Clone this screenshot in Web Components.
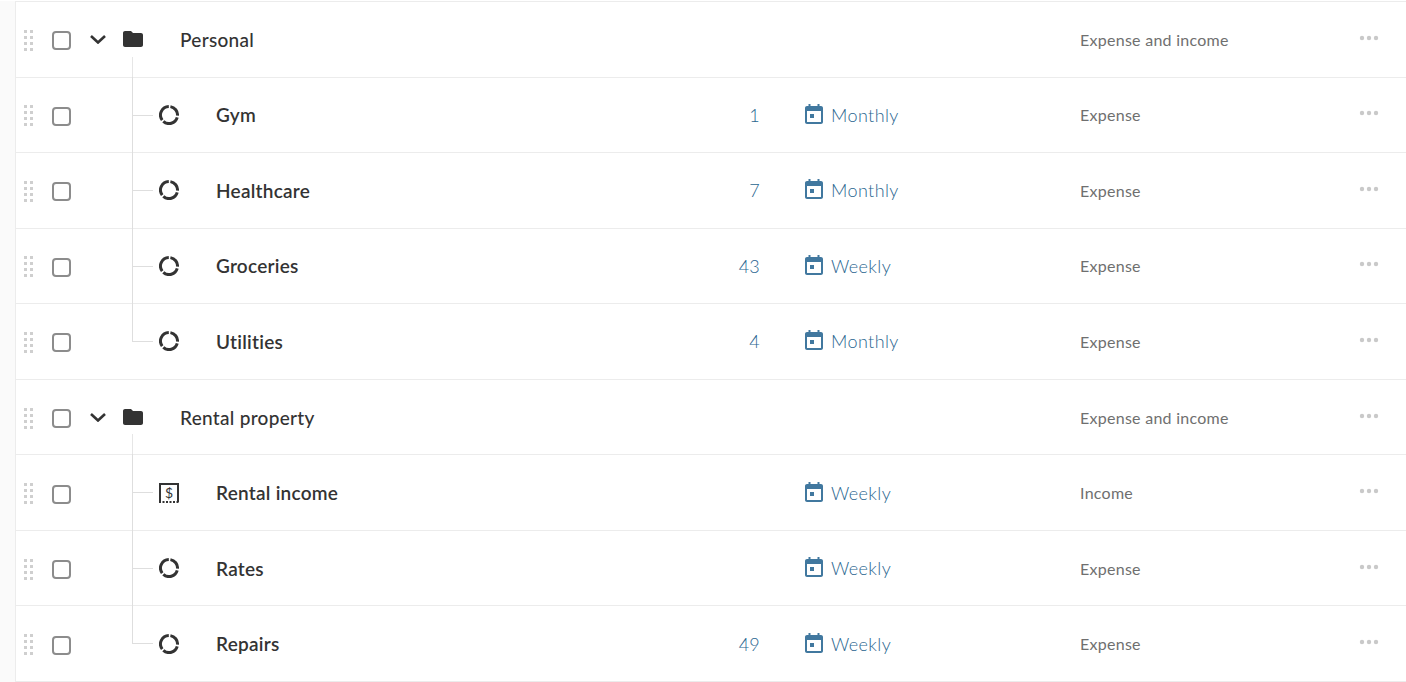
<!DOCTYPE html>
<html lang="en"><head><meta charset="utf-8"><title>Categories</title>
<style>
html,body{margin:0;padding:0;background:#fff}
body{font-family:Lato,"Open Sans",sans-serif;overflow:hidden;height:682px}
</style></head><body>
<template id="cat-list-t"><style>
:host{display:block;margin-left:15px;margin-top:1px;border-left:1px solid #ececec;box-shadow:-15px 0 0 #fafafa;border-top:1px solid #ececec;height:680px}
.g{display:grid;grid-auto-rows:75.556px}
</style><div class="g"><slot></slot></div></template>

<template id="cat-row-t"><style>
:host{display:flex;align-items:center;position:relative;border-bottom:1px solid #ececec;box-sizing:border-box;min-height:0;color:#333}
.handle{display:flex;margin-left:8px;width:10px;margin-top:2px;flex:none}
.check{flex:none;box-sizing:border-box;width:19px;height:19px;border:2px solid #8c8c8c;border-radius:4px;margin-left:18px;margin-top:3px;background:#fff}
.lead{flex:none;display:flex;align-items:center;height:100%}
.chev{margin-left:19px;width:16px;height:9px;display:block}
.folder{margin-left:17px;width:20px;height:16px;display:block}
.icon{margin-left:88px;width:20px;height:20px;display:block}
.name{flex:none;font-size:19px;letter-spacing:.25px;font-weight:600;white-space:nowrap}
:host([kind=group]) .name{margin-left:37px;width:900px;font-weight:500;letter-spacing:.3px}
:host([kind=child]) .name{margin-left:37px;width:508px}
.count{flex:none;width:36px;margin-right:45px;text-align:right;font-size:18px;color:#2a6690;font-weight:300;letter-spacing:.2px}
.freq{flex:none;width:275px;display:flex;align-items:center;gap:8px;font-size:18px;color:#2a6690;font-weight:300;letter-spacing:.4px}
.freq svg{width:18px;height:20px;display:block;margin-top:-2px}
.type{flex:none;width:279px;font-size:16px;color:#6f6f6f;letter-spacing:.27px;font-weight:400}
.dots{flex:none;margin-top:-3px;display:block;width:20px;height:6px}
.v{position:absolute;left:116px;top:-1px;bottom:-1px;width:1px;background:#dedede}
:host([kind=group]) .v{left:116px;top:auto;bottom:-1px;height:21px;background:#e6e6e6}
:host([last]) .v{bottom:auto;height:39px}
.h{position:absolute;left:116px;top:37px;width:21px;height:1px;background:#dedede}
</style>
<span class="v"></span><span class="h"></span>
<svg class="handle" viewBox="0 0 10 21" height="21" fill="#cfcfcf"><rect x="0" y="0" width="3" height="3"/><rect x="6" y="0" width="3" height="3"/><rect x="0" y="6" width="3" height="3"/><rect x="6" y="6" width="3" height="3"/><rect x="0" y="12" width="3" height="3"/><rect x="6" y="12" width="3" height="3"/><rect x="0" y="18" width="3" height="3"/><rect x="6" y="18" width="3" height="3"/></svg>
<span class="check"></span>
<span class="lead"></span>
<span class="name"><slot></slot></span>
<span class="count"></span>
<span class="freq"></span>
<span class="type"></span>
<svg class="dots" viewBox="0 0 20 6" fill="#c9c9c9"><circle cx="3" cy="3" r="2.2"/><circle cx="10" cy="3" r="2.2"/><circle cx="17" cy="3" r="2.2"/></svg>
</template>

<cat-list>
<cat-row kind="group" type="Expense and income">Personal</cat-row>
<cat-row kind="child" icon="donut" count="1" freq="Monthly" type="Expense">Gym</cat-row>
<cat-row kind="child" icon="donut" count="7" freq="Monthly" type="Expense">Healthcare</cat-row>
<cat-row kind="child" icon="donut" count="43" freq="Weekly" type="Expense">Groceries</cat-row>
<cat-row kind="child" last icon="donut" count="4" freq="Monthly" type="Expense">Utilities</cat-row>
<cat-row kind="group" type="Expense and income">Rental property</cat-row>
<cat-row kind="child" icon="receipt" freq="Weekly" type="Income">Rental income</cat-row>
<cat-row kind="child" icon="donut" freq="Weekly" type="Expense">Rates</cat-row>
<cat-row kind="child" last icon="donut" count="49" freq="Weekly" type="Expense">Repairs</cat-row>
</cat-list>

<script>
const ICONS={
donut:'<svg class="icon" viewBox="0 0 20 20" fill="none" stroke="#333" stroke-width="3"><path d="M11.4 1.620A8.500 8.500 0 0 1 18.480 10.740"/><path d="M18.200 12.330A8.500 8.500 0 0 1 4.310 16.320"/><path d="M3.200 15.110A8.500 8.500 0 0 1 9.800 1.500"/></svg>',
receipt:'<svg class="icon" viewBox="0 0 20 20" fill="none" stroke="#333"><path stroke-width="2" d="M1 19V1h18v18"/><path stroke-width="2" stroke-dasharray="2 1.500" d="M0 19h20"/><text x="10" y="15" font-size="14" font-weight="400" text-anchor="middle" fill="#333" stroke="none" font-family="Lato, sans-serif">$</text></svg>'
};
const LEAD='<svg class="chev" viewBox="0 0 16 9" fill="none" stroke="#333" stroke-width="2.6"><path d="M1 1l7 6.500L15 1"/></svg><svg class="folder" viewBox="2 4 20 16" fill="#333"><path d="M10 4H4c-1.100 0-2 .9-2 2v12c0 1.100.9 2 2 2h16c1.100 0 2-.9 2-2V8c0-1.100-.9-2-2-2h-8l-2-2z"/></svg>';
const CAL='<svg viewBox="0 0 18 20" fill="#41789f"><path fill-rule="evenodd" d="M3.500 0h2v2h7V0h2v2H16c1.100 0 2 .9 2 2v14c0 1.100-.9 2-2 2H2c-1.100 0-2-.9-2-2V4c0-1.100.9-2 2-2h1.500zM2 7v11h14V7z"/><rect x="5" y="10" width="4" height="4"/></svg>';
class CatList extends HTMLElement{constructor(){super();this.attachShadow({mode:'open'}).append(document.getElementById('cat-list-t').content.cloneNode(true))}}
class CatRow extends HTMLElement{
 constructor(){super();this.attachShadow({mode:'open'}).append(document.getElementById('cat-row-t').content.cloneNode(true))}
 connectedCallback(){
  const s=this.shadowRoot,k=this.getAttribute('kind');
  s.querySelector('.lead').innerHTML=k==='group'?LEAD:ICONS[this.getAttribute('icon')];
  s.querySelector('.h').style.display=k==='group'?'none':'';
  if(k==='child'){s.querySelector('.count').textContent=this.getAttribute('count')||'';
   s.querySelector('.freq').innerHTML=CAL+'<span>'+this.getAttribute('freq')+'</span>';}
  else{s.querySelector('.count').style.display='none';s.querySelector('.freq').style.display='none';}
  s.querySelector('.type').textContent=this.getAttribute('type');
 }
}
customElements.define('cat-list',CatList);customElements.define('cat-row',CatRow);
</script>
</body></html>
